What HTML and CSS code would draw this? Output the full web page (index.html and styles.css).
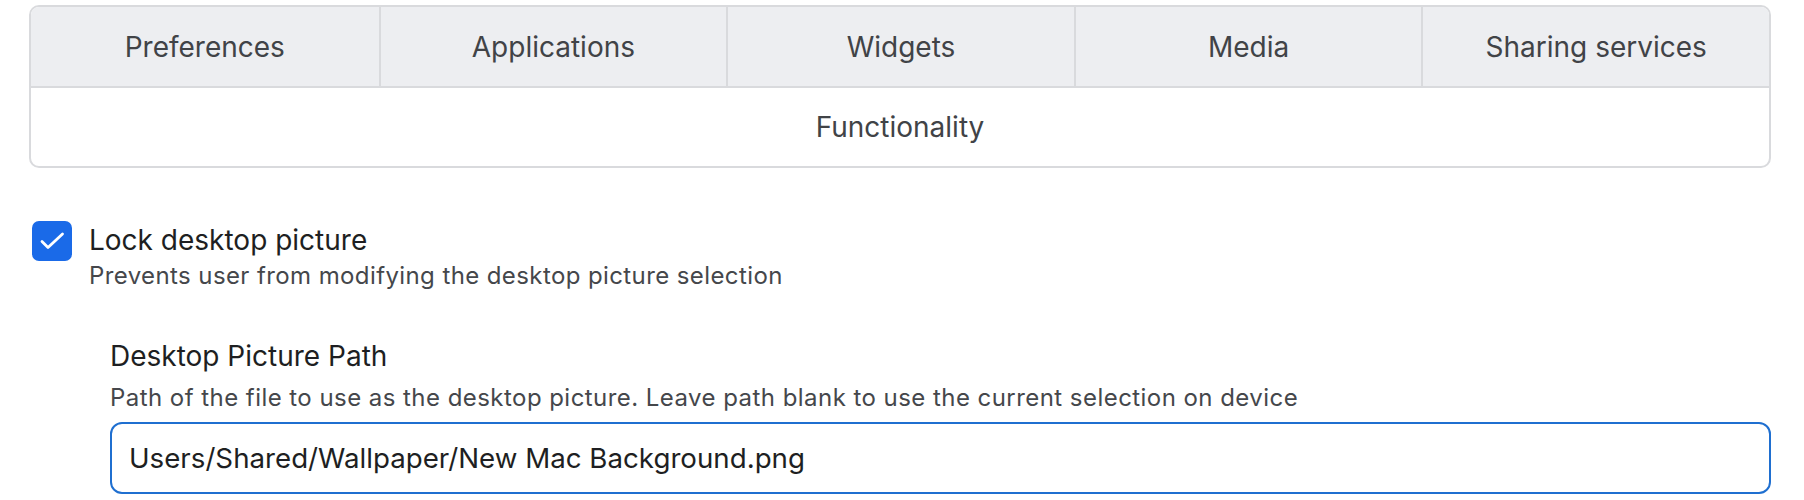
FILE: index.html
```html
<!DOCTYPE html>
<html>
<head>
<meta charset="utf-8">
<link rel="stylesheet" href="styles.css">
</head>
<body>
<div class="page">
  <div class="tabs">
    <div class="tab-row">
      <div class="tab">Preferences</div>
      <div class="tab">Applications</div>
      <div class="tab">Widgets</div>
      <div class="tab">Media</div>
      <div class="tab">Sharing services</div>
    </div>
    <div class="tab-body">Functionality</div>
  </div>

  <div class="option">
    <div class="checkbox">
      <svg width="40" height="40" viewBox="0 0 40 40"><path d="M10 20.5l6 6L30.5 13" fill="none" stroke="#fff" stroke-width="2.8" stroke-linecap="round" stroke-linejoin="round"/></svg>
    </div>
    <div class="option-text">
      <div class="option-title">Lock desktop picture</div>
      <div class="option-desc">Prevents user from modifying the desktop picture selection</div>
    </div>
  </div>

  <div class="field">
    <div class="field-label">Desktop Picture Path</div>
    <div class="field-help">Path of the file to use as the desktop picture. Leave path blank to use the current selection on device</div>
    <div class="input">Users/Shared/Wallpaper/New Mac Background.png</div>
  </div>
</div>
</body>
</html>
```

FILE: styles.css
```css
html, body {
  margin: 0;
  padding: 0;
  background: #ffffff;
}
body {
  font-family: Inter, "Noto Sans", sans-serif;
  color: #222326;
}
.page {
  padding: 5px 33px 0 29px;
}
.tabs {
  border: 2px solid #d9dadd;
  border-radius: 10px;
  overflow: hidden;
}
.tab-row {
  display: grid;
  grid-template-columns: repeat(5, 1fr);
  background: #edeef1;
  border-bottom: 2px solid #d9dadd;
}
.tab {
  height: 79px;
  display: flex;
  align-items: center;
  justify-content: center;
  font-size: 28px;
  color: #414347;
  border-left: 2px solid #d9dadd;
}
.tab:first-child {
  border-left: none;
}
.tab-body {
  height: 78px;
  display: flex;
  align-items: center;
  justify-content: center;
  font-size: 28px;
  color: #414347;
}
.option {
  display: flex;
  gap: 17px;
  margin-top: 53px;
  padding-left: 3px;
}
.checkbox {
  width: 40px;
  height: 40px;
  border-radius: 7px;
  background: #1a6ae8;
  flex-shrink: 0;
}
.checkbox svg {
  display: block;
}
.option-title {
  font-size: 28px;
  line-height: 38px;
  color: #1e1f22;
}
.option-desc {
  font-size: 24px;
  line-height: 34px;
  color: #45474b;
  letter-spacing: 0.4px;
}
.field {
  margin-left: 81px;
  margin-top: 44px;
}
.field-label {
  font-size: 28px;
  line-height: 38px;
  color: #1e1f22;
}
.field-help {
  margin-top: 7px;
  font-size: 24px;
  line-height: 32px;
  color: #45474b;
  letter-spacing: 0.45px;
}
.input {
  margin-top: 8px;
  height: 68px;
  border: 2px solid #1f6fd0;
  border-radius: 12px;
  display: flex;
  align-items: center;
  padding-left: 17px;
  font-size: 27.7px;
  color: #1e1f22;
}
```
